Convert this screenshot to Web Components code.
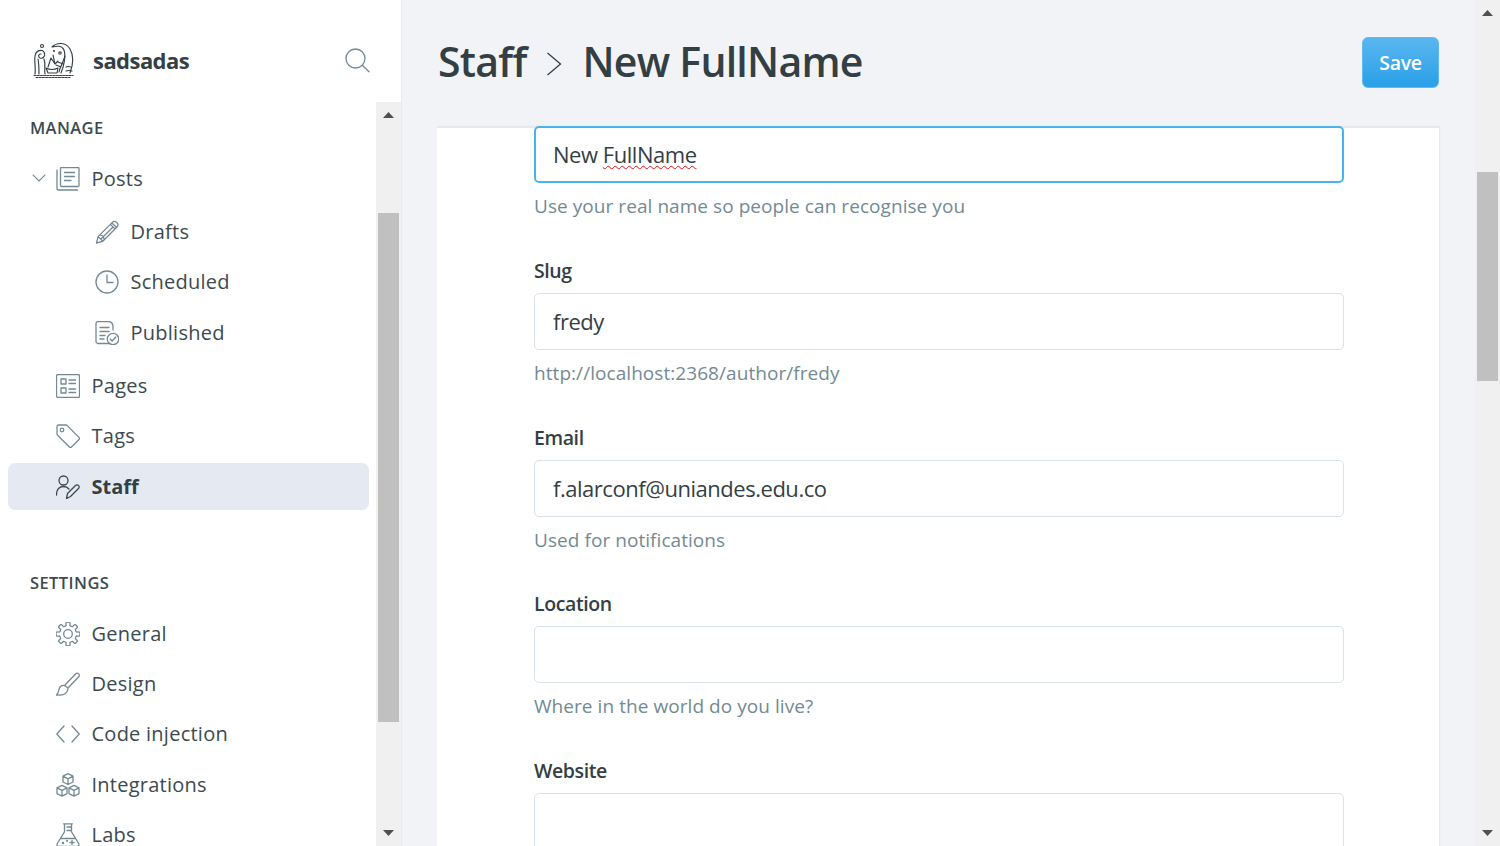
<!DOCTYPE html>
<html lang="en">
<head>
<meta charset="utf-8">
<title>Staff - New FullName</title>
<style>
  html, body { margin: 0; height: 100%; overflow: hidden; }
  body { font-family: "Open Sans", "Noto Sans", sans-serif; color: #3c4a50; }
</style>
</head>
<body>
<staff-app></staff-app>
<script>
// gear outline, easier to compute than to write out by hand
function gearPath() {
  let d = "";
  const teeth = 8;
  for (let i = 0; i < teeth; i++) {
    const a = (i / teeth) * Math.PI * 2 - Math.PI / 2;
    const step = Math.PI * 2 / teeth;
    const pt = (r, t) => (12 + r * Math.cos(t)).toFixed(2) + " " + (12 + r * Math.sin(t)).toFixed(2);
    d += (i ? "L" : "M") + pt(8.7, a - step * 0.27) + "Q" + pt(12.9, a - step * 0.28) + " " + pt(11.8, a) + "Q" + pt(12.9, a + step * 0.28) + " " + pt(8.7, a + step * 0.27) + "Q" + pt(8.1, a + step * 0.5) + " " + pt(8.7, a + step * 0.73);
  }
  return d + "Z";
}

const ICONS = {
  posts: `<rect x="4.5" y=".5" width="18.5" height="19" rx="1"/><path d="M1 3v18a2 2 0 0 0 2 2h18.5M8.5 5.5h10M8.5 9.5h10M8.5 13.5h6.5"/>`,
  drafts: `<path d="M1.5 23l1.6-6.4L17.6 2.1a2.6 2.6 0 0 1 3.7 0l.9.9a2.6 2.6 0 0 1 0 3.7L7.8 21.3zM3.1 16.6l4.7 4.7M15.4 4.4l4.5 4.5M5 15l3 1 1 3M17 3l4 4M6 19l12-12"/>`,
  scheduled: `<circle cx="12" cy="12" r="11"/><path d="M12 5v7.5h6"/>`,
  published: `<path d="M14 22.5H3a2 2 0 0 1-2-2v-18a2 2 0 0 1 2-2h10.5c3 0 4.5 2.500 4.500 5.500v3M5 6.500h9M5 10.500h9M5 14.500h5M5 18h4"/><circle cx="18" cy="18" r="5.700"/><path d="M15.200 18l2 2 3.600-4"/>`,
  pages: `<rect x=".5" y=".5" width="23" height="23" rx="1.500"/><rect x="5" y="5" width="5" height="5"/><rect x="5" y="14" width="5" height="5"/><path d="M13 6h6.500M13 9.500h6.500M13 15h6.500M13 18.500h6.500"/>`,
  tags: `<path d="M1 2.500A1.500 1.500 0 0 1 2.500 1H9.800a2 2 0 0 1 1.400.6L23 13.400a1.500 1.500 0 0 1 0 2.100l-7.500 7.500a1.500 1.500 0 0 1-2.100 0L1.600 11.200A2 2 0 0 1 1 9.800z"/><circle cx="6" cy="6" r="1.800"/>`,
  staff: `<circle cx="7.500" cy="5.500" r="4.500"/><path d="M.5 20c0-6 3-8.500 7-8.500 2.500 0 4.200.9 5.500 2.500M10.500 23.500l1-5L19.500 10.500a2 2 0 0 1 3 0 2 2 0 0 1 0 3L14.500 21.500z"/>`,
  general: `<path d="${gearPath()}"/><circle cx="12" cy="12" r="4.300"/>`,
  design: `<path d="M8.500 13.500L20 1.500a2.200 2.200 0 0 1 3 3L12 16zM8.500 13.500c-3.500-.5-5 1.500-5.500 4-.3 2-1 4-2.500 5.500 4.500.5 9-.5 10.500-3.500.8-1.500 1-2.500 1-3.500"/>`,
  code: `<path d="M8 4L.8 12 8 20M16 4l7.200 8-7.200 8"/>`,
  integrations: `<path d="M12 .7l5 2.500v5.800l-5 2.500-5-2.500V3.200zM7 3.200l5 2.600 5-2.600M12 5.800v5.700M6 12.300l5 2.500v5.800l-5 2.500-5-2.500v-5.800zM1 14.800l5 2.600 5-2.600M6 17.400v5.700M18 12.300l5 2.500v5.800l-5 2.500-5-2.500v-5.800zM13 14.800l5 2.600 5-2.600M18 17.400v5.700"/>`,
  labs: `<path d="M7.500.8h9M8.500.8v8L1.300 20.500a2 2 0 0 0 1.700 3h18a2 2 0 0 0 1.700-3L15.500 8.800V.8M4.500 15.500h15M11 4h4.500M11 7.500h4.500"/><circle cx="7" cy="20" r=".6"/><path d="M14 19.500h4M16 17.500v4"/><circle cx="11" cy="17.800" r=".5"/>`
};

class BrandHeader extends HTMLElement {
  constructor() {
    super();
    this.attachShadow({ mode: "open" });
    this.shadowRoot.innerHTML = `
      <style>
        :host { display: flex; align-items: center; height: 102px; padding: 18px 31px 0 33px; box-sizing: border-box; flex: none; }
        .logo { width: 42px; height: 38px; flex: none; }
        .name { flex: 1; margin-left: 18px; font-size: 22px; font-weight: 700; color: #343f44; letter-spacing: -.55px; }
        .search { width: 26px; height: 26px; flex: none; margin-top: 2px; }
      </style>
      <svg class="logo" viewBox="0 0 42 38" fill="none" stroke="#343f44" stroke-width="1.150" stroke-linecap="round" stroke-linejoin="round">
        <path d="M19 6C24 1 33 1 37 8c4 7 3 16 0 24M19 6c5-1 10-2 12 3 2 6 0 16-3 23"/>
        <path d="M2 33c1-7-1-13 0-18 1-6 7-7 9-4 2 4-1 7-4 6-2-1-2-4 1-4M12 33c-1-6 1-9-1-15M6 33c0-6 0-10-1-15"/>
        <path d="M15 26l3-9 4 6M20 14l2 9 3-3M13 27q6 3 12 0l-1 5h-9z"/>
        <path d="M26 31c1-5 4-9 6-16M23 24l5 2M25 21l5 2"/>
        <circle cx="9" cy="5" r="1.500"/><circle cx="27" cy="12" r="1.200"/><circle cx="21" cy="10" r=".5"/>
        <path d="M1 34.500h39" stroke-dasharray="2 1.200"/>
        <path d="M3 36.500h34" stroke-dasharray="2 1.200"/>
        <path d="M33 26q2-1 5 0M33 30q3-1 6 0"/>
      </svg>
      <div class="name"><slot></slot></div>
      <svg class="search" viewBox="0 0 26 26" fill="none" stroke="#738a94" stroke-width="1.300" stroke-linecap="round">
        <circle cx="11.500" cy="10.500" r="9.500"/><path d="M18.300 17.300l6.700 6.400"/>
      </svg>`;
  }
}

class SectionTitle extends HTMLElement {
  constructor() {
    super();
    this.attachShadow({ mode: "open" });
    this.shadowRoot.innerHTML = `
      <style>
        :host { display: block; height: 24px; line-height: 24px; padding-left: 22px; font-size: 16.500px; font-weight: 550; color: #3c4a50; letter-spacing: .42px; }
      </style>
      <slot></slot>`;
  }
}

class NavItem extends HTMLElement {
  static get observedAttributes() { return ["icon", "label", "sub", "active", "open"]; }
  constructor() {
    super();
    this.attachShadow({ mode: "open" });
  }
  connectedCallback() { this.render(); }
  attributeChangedCallback() { this.render(); }
  render() {
    const icon = ICONS[this.getAttribute("icon")] || "";
    const active = this.hasAttribute("active");
    const caret = this.hasAttribute("open")
      ? `<svg class="caret" viewBox="0 0 14 8" fill="none" stroke="#738a94" stroke-width="1.100"><path d="M.7.7L7 7l6.300-6.300"/></svg>`
      : "";
    this.shadowRoot.innerHTML = `
      <style>
        :host { display: block; }
        a { position: relative; display: flex; align-items: center; height: 47px; box-sizing: border-box; border-radius: 7px; padding-left: ${this.hasAttribute("sub") ? 87 : 48}px; color: #3c4a50; font-size: 20px; line-height: 1; letter-spacing: .25px; }
        a.active { background: #e5eaf2; color: #343f44; font-weight: 700; letter-spacing: 0; }
        .icon { width: 24px; height: 24px; flex: none; margin-right: 11.500px; }
        .caret { position: absolute; left: 24px; top: 19px; width: 14px; height: 8px; }
      </style>
      <a class="${active ? "active" : ""}">${caret}<svg class="icon" viewBox="0 0 24 24" fill="none" stroke="${active ? "#3c4a50" : "#738a94"}" stroke-width="1.300" stroke-linecap="round" stroke-linejoin="round">${icon}</svg><span>${this.getAttribute("label") || ""}</span></a>`;
  }
}

class FakeScroll extends HTMLElement {
  constructor() {
    super();
    this.attachShadow({ mode: "open" });
    const top = this.getAttribute("thumb-top") || 0;
    const h = this.getAttribute("thumb-height") || 100;
    this.shadowRoot.innerHTML = `
      <style>
        :host { display: flex; flex-direction: column; align-items: center; background: #f0f0f0; flex: none; box-sizing: border-box; }
        .arrow { height: 26px; width: 100%; flex: none; display: flex; align-items: center; justify-content: center; }
        svg { width: 11px; height: 6px; display: block; }
        .thumb { width: 21px; height: ${h}px; margin-top: ${top}px; background: #c0c0c0; flex: none; }
        .rest { flex: 1; }
      </style>
      <div class="arrow"><svg viewBox="0 0 11 6"><path d="M5.500 0L11 6H0z" fill="#505050"/></svg></div>
      <div class="thumb"></div>
      <div class="rest"></div>
      <div class="arrow"><svg viewBox="0 0 11 6"><path d="M0 0h11L5.500 6z" fill="#505050"/></svg></div>`;
  }
}

class SideBar extends HTMLElement {
  constructor() {
    super();
    this.attachShadow({ mode: "open" });
    this.shadowRoot.innerHTML = `
      <style>
        :host { display: flex; flex-direction: column; width: 402px; height: 846px; flex: none; background: #fff; border-right: 1px solid #e8eaee; box-sizing: border-box; overflow: hidden; }
        .body { flex: 1; display: flex; min-height: 0; }
        nav { width: 376px; flex: none; box-sizing: border-box; padding: 14px 7px 0 8px; overflow: hidden; }
        nav-item { margin-bottom: 3.350px; }
        .subs { padding: 3px 0; }
        .settings { margin-top: 61px; }
        .first { margin-top: 15px; }
        fake-scroll { width: 25px; }
      </style>
      <brand-header>sadsadas</brand-header>
      <div class="body">
        <nav>
          <section-title>MANAGE</section-title>
          <nav-item class="first" icon="posts" label="Posts" open></nav-item>
          <div class="subs">
            <nav-item icon="drafts" label="Drafts" sub></nav-item>
            <nav-item icon="scheduled" label="Scheduled" sub></nav-item>
            <nav-item icon="published" label="Published" sub></nav-item>
          </div>
          <nav-item icon="pages" label="Pages"></nav-item>
          <nav-item icon="tags" label="Tags"></nav-item>
          <nav-item icon="staff" label="Staff" active></nav-item>
          <section-title class="settings">SETTINGS</section-title>
          <nav-item class="first" icon="general" label="General"></nav-item>
          <nav-item icon="design" label="Design"></nav-item>
          <nav-item icon="code" label="Code injection"></nav-item>
          <nav-item icon="integrations" label="Integrations"></nav-item>
          <nav-item icon="labs" label="Labs"></nav-item>
        </nav>
        <fake-scroll thumb-top="85" thumb-height="509"></fake-scroll>
      </div>`;
  }
}

class FormField extends HTMLElement {
  constructor() {
    super();
    this.attachShadow({ mode: "open" });
    const label = this.getAttribute("label");
    const focused = this.hasAttribute("focused");
    this.shadowRoot.innerHTML = `
      <style>
        :host { display: block; margin-bottom: 39.750px; }
        label { display: block; height: 24px; line-height: 24px; margin-bottom: 10px; font-size: 19.500px; font-weight: 600; color: #343f44; letter-spacing: -.4px; }
        .input { height: 57px; box-sizing: border-box; padding: 0 18px; border: 1px solid #dae1e7; border-radius: 5px; background: #fff; display: flex; align-items: center; font-size: 22px; color: #343f44; letter-spacing: -.47px; }
        .input.focused { border: 2px solid #48b3f2; padding: 0 17px 2px; }
        .hint { height: 26px; line-height: 26px; margin-top: 10px; font-size: 19px; color: #738a94; letter-spacing: .06px; }
      </style>
      ${label ? `<label>${label}</label>` : ""}
      <div class="input ${focused ? "focused" : ""}"><slot name="value"></slot></div>
      <div class="hint"><slot name="hint"></slot></div>`;
  }
}

class PageHeader extends HTMLElement {
  constructor() {
    super();
    this.attachShadow({ mode: "open" });
    this.shadowRoot.innerHTML = `
      <style>
        :host { display: flex; align-items: center; height: 126px; padding-bottom: 2px; box-sizing: border-box; flex: none; }
        h2 { flex: 1; margin: 0 0 3px; display: flex; align-items: center; font-size: 41px; font-weight: 550; color: #343f44; letter-spacing: -.75px; padding-left: 1px; }
        svg { width: 16px; height: 24px; margin: 7px 20px 0 20px; flex: none; }
        button { width: 77px; height: 51px; border: 1px solid #62baf0; border-radius: 6px; background: linear-gradient(#5ab6ef, #29a0e8); color: #fff; font: 600 19.500px "Open Sans", sans-serif; letter-spacing: -.3px; padding: 0; }
      </style>
      <h2><slot name="parent"></slot><svg viewBox="0 0 16 24" fill="none" stroke="#343f44" stroke-width="1.300"><path d="M1.500 1l13 11-13 11"/></svg><slot name="current"></slot></h2>
      <button>Save</button>`;
  }
}

class StaffApp extends HTMLElement {
  constructor() {
    super();
    this.attachShadow({ mode: "open" });
    this.shadowRoot.innerHTML = `
      <style>
        :host { display: flex; width: 1500px; height: 846px; overflow: hidden; background: #f2f3f7; }
        main { flex: 1; min-width: 0; display: flex; flex-direction: column; padding: 0 36px 0 35px; }
        .card { flex: 1; min-height: 0; background: #fff; border-top: 2px solid #e4e9ed; box-shadow: 1px 0 1px rgba(60,75,90,.06); padding: 0 95px 0 97px; }
        .form { margin-top: -2px; }
        u { text-decoration: underline wavy #e8101c 1.200px; text-underline-offset: 2px; }
        fake-scroll { width: 25px; }
      </style>
      <side-bar></side-bar>
      <main>
        <page-header>
          <span slot="parent">Staff</span>
          <span slot="current">New FullName</span>
        </page-header>
        <div class="card"><div class="form">
          <form-field focused>
            <span slot="value">New <u>FullName</u></span>
            <span slot="hint">Use your real name so people can recognise you</span>
          </form-field>
          <form-field label="Slug">
            <span slot="value">fredy</span>
            <span slot="hint">http://localhost:2368/author/fredy</span>
          </form-field>
          <form-field label="Email">
            <span slot="value">f.alarconf@uniandes.edu.co</span>
            <span slot="hint">Used for notifications</span>
          </form-field>
          <form-field label="Location">
            <span slot="value"></span>
            <span slot="hint">Where in the world do you live?</span>
          </form-field>
          <form-field label="Website">
            <span slot="value"></span>
          </form-field>
        </div></div>
      </main>
      <fake-scroll thumb-top="146" thumb-height="209"></fake-scroll>`;
  }
}

customElements.define("brand-header", BrandHeader);
customElements.define("section-title", SectionTitle);
customElements.define("nav-item", NavItem);
customElements.define("fake-scroll", FakeScroll);
customElements.define("side-bar", SideBar);
customElements.define("form-field", FormField);
customElements.define("page-header", PageHeader);
customElements.define("staff-app", StaffApp);
</script>
</body>
</html>
